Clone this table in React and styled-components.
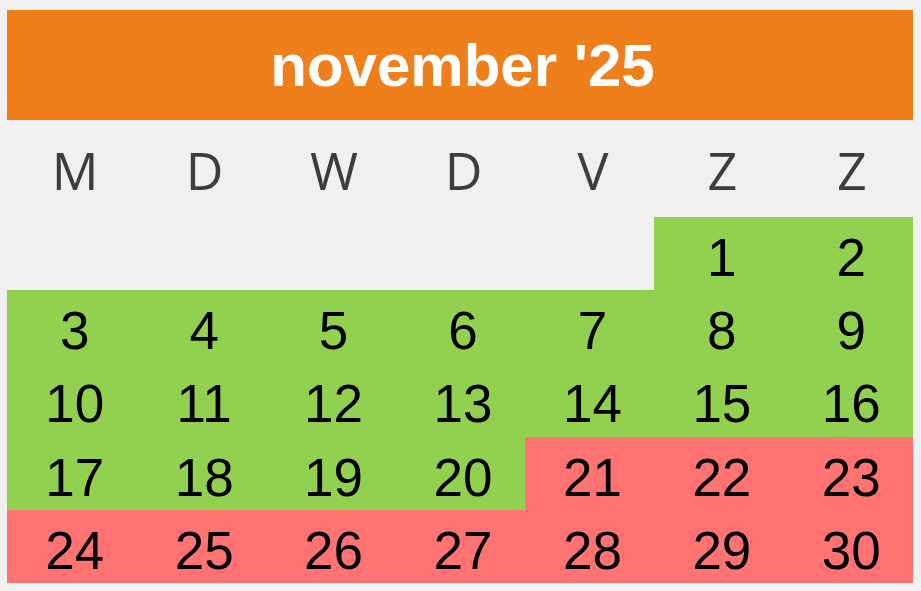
import React from "react";
import styled, { createGlobalStyle } from "styled-components";

const GlobalStyle = createGlobalStyle`
  html, body {
    margin: 0;
    padding: 0;
    background: #f0f0f0;
  }
`;

const weekdays = ["M", "D", "W", "D", "V", "Z", "Z"];

// 1 nov 2025 is a saturday, so five blanks first
const days = [
  ...Array(5).fill(null),
  ...Array.from({ length: 30 }, (_, i) => i + 1),
];

const Page = styled.div`
  padding: 10px 8px 0 7px;
`;

const Header = styled.div`
  height: 110px;
  display: flex;
  align-items: center;
  justify-content: center;
  padding-left: 5px;
  box-sizing: border-box;
  background-color: #ef7f1a;
  color: #ffffff;
  font-family: "Liberation Sans", Arial, sans-serif;
  font-weight: 700;
  font-size: 60px;
`;

const WeekRow = styled.div`
  height: 97px;
  display: grid;
  grid-template-columns: repeat(7, 1fr);
`;

const WeekDay = styled.div`
  display: flex;
  align-items: center;
  justify-content: center;
  padding: 2px 0 0 7px;
  box-sizing: border-box;
  font-family: "Open Sans", sans-serif;
  font-size: 52px;
  color: #3d3d3d;
`;

const Grid = styled.div`
  height: 366px;
  display: grid;
  grid-template-columns: repeat(7, 1fr);
  grid-template-rows: repeat(5, 1fr);
`;

const Day = styled.div`
  display: flex;
  align-items: center;
  justify-content: center;
  padding: 8px 0 0 6px;
  box-sizing: border-box;
  font-family: "Liberation Sans", Arial, sans-serif;
  font-size: 53px;
  color: #000000;
  background-color: ${(p) =>
    p.$tone === "green" ? "#92d050" : p.$tone === "red" ? "#ff7373" : "transparent"};
`;

const App = () => {
  return (
    <Page>
      <GlobalStyle />
      <Header>november '25</Header>
      <WeekRow>
        {weekdays.map((d, i) => (
          <WeekDay key={i}>{d}</WeekDay>
        ))}
      </WeekRow>
      <Grid>
        {days.map((day, i) => {
          const tone = day === null ? "none" : day <= 20 ? "green" : "red";
          return (
            <Day key={i} $tone={tone}>
              {day}
            </Day>
          );
        })}
      </Grid>
    </Page>
  );
};

export default App;
